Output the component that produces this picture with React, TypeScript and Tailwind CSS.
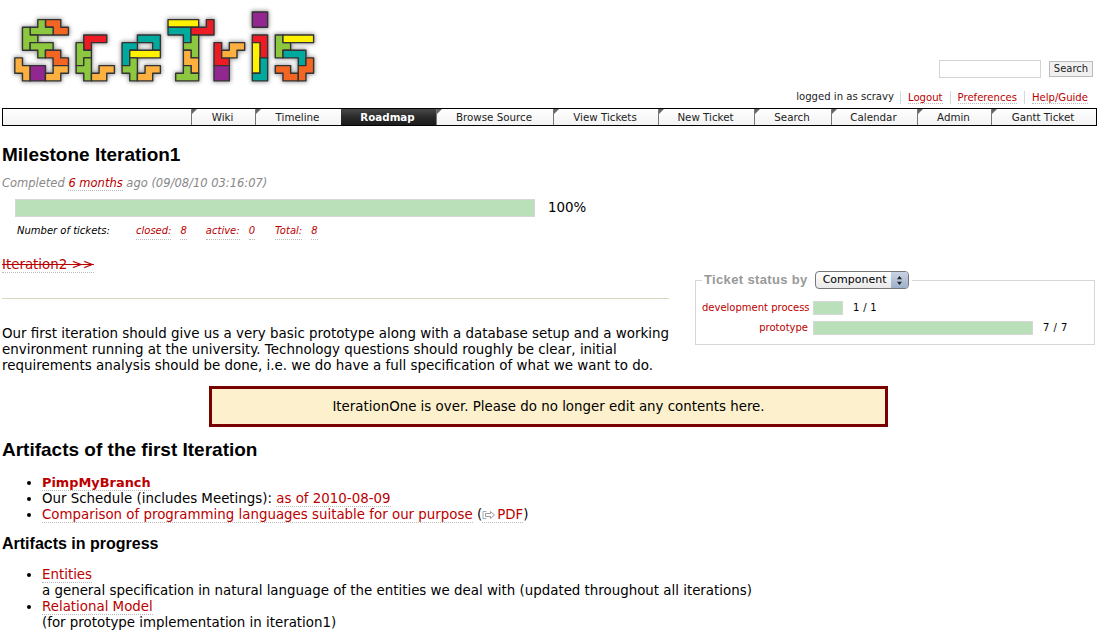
import React from "react";

const C = { o: "#f26522", g: "#8dc63f", l: "#fbb040", p: "#92278f", r: "#ed1c24", t: "#00a99d", y: "#fff200" };
const pieces: [string, string][] = [
  ["4,2 6,2 6,3 7,3 7,4 5,4 5,3 4,3", C.o],
  ["3,2 4,2 4,3 5,3 5,4 2,4 2,3 3,3", C.g],
  ["1,3 2,3 2,4 3,4 3,5 2,5 2,6 1,6", C.g],
  ["2,5 5,5 5,6 4,6 4,7 3,7 3,6 2,6", C.g],
  ["4,6 6,6 6,7 7,7 7,8 5,8 5,7 4,7", C.o],
  ["0,7 1,7 1,8 2,8 2,10 1,10 1,9 0,9", C.l],
  ["2,8 4,8 4,10 2,10", C.p],
  ["5,8 7,8 7,9 6,9 6,10 4,10 4,9 5,9", C.l],
  ["9,4 12,4 12,5 10,5 10,6 9,6", C.r],
  ["8,5 9,5 9,6 10,6 10,7 9,7 9,8 8,8", C.g],
  ["9,7 10,7 10,10 9,10 9,9 8,9 8,8 9,8", C.g],
  ["11,8 13,8 13,9 12,9 12,10 10,10 10,9 11,9", C.l],
  ["16,4 19,4 19,6 18,6 18,5 16,5", C.t],
  ["14,5 16,5 16,6 15,6 15,8 14,8", C.t],
  ["15,6 19,6 19,7 15,7", C.y],
  ["15,7 16,7 16,10 15,10 15,9 14,9 14,8 15,8", C.g],
  ["17,8 19,8 19,9 18,9 18,10 16,10 16,9 17,9", C.l],
  ["20,2 24,2 24,3 20,3", C.y],
  ["20,3 23,3 23,5 22,5 22,4 20,4", C.t],
  ["25,2 26,2 26,4 23,4 23,3 25,3", C.r],
  ["23,4 24,4 24,7 23,7 23,6 22,6 22,5 23,5", C.g],
  ["22,6 23,6 23,7 24,7 24,9 23,9 23,8 22,8", C.l],
  ["22,8 23,8 23,9 24,9 24,10 21,10 21,9 22,9", C.g],
  ["26,5 27,5 27,7 28,7 28,8 26,8", C.r],
  ["28,5 30,5 30,6 29,6 29,7 27,7 27,6 28,6", C.l],
  ["26,8 28,8 28,10 26,10", C.p],
  ["31,1 33,1 33,3 31,3", C.p],
  ["31,4 33,4 33,7 32,7 32,5 31,5", C.r],
  ["31,5 32,5 32,9 31,9", C.y],
  ["32,7 33,7 33,10 31,10 31,9 32,9", C.t],
  ["34,4 35,4 35,5 36,5 36,6 35,6 35,7 34,7", C.g],
  ["35,4 39,4 39,5 35,5", C.y],
  ["35,6 38,6 38,8 37,8 37,7 35,7", C.t],
  ["34,8 36,8 36,9 37,9 37,10 35,10 35,9 34,9", C.o],
  ["38,7 39,7 39,9 38,9 38,10 37,10 37,8 38,8", C.o],
];

function Logo() {
  return (
    <svg width="320" height="95" viewBox="-1.9 -0.56 41.7 12.4" className="block">
      <defs>
        <filter id="sh" x="-10%" y="-10%" width="120%" height="120%">
          <feGaussianBlur stdDeviation="0.3" />
        </filter>
      </defs>
      <g filter="url(#sh)" opacity="0.55">
        {pieces.map(([p], i) => (
          <polygon key={i} points={p} fill="#333" stroke="#333" strokeWidth="0.3" />
        ))}
      </g>
      {pieces.map(([p, c], i) => (
        <polygon key={i} points={p} fill={c} stroke="#333" strokeWidth="0.18" strokeLinejoin="round" />
      ))}
    </svg>
  );
}

const navItems: [string, string][] = [
  ["Wiki", "w-[64px]"],
  ["Timeline", "w-[86px]"],
  ["Roadmap", "w-[95px]"],
  ["Browse Source", "w-[117px]"],
  ["View Tickets", "w-[105px]"],
  ["New Ticket", "w-[96px]"],
  ["Search", "w-[77px]"],
  ["Calendar", "w-[86px]"],
  ["Admin", "w-[74px]"],
  ["Gantt Ticket", "w-[105px]"],
];

function L({ children, className = "" }: { children: React.ReactNode; className?: string }) {
  return <a className={`text-[#b00] border-b border-dotted border-[#bbb] ${className}`}>{children}</a>;
}

function PdfIcon() {
  return (
    <svg width="14" height="10" viewBox="0 0 14 10" className="inline-block mr-[1px] align-[-1px]">
      <path d="M4.5 1.5H1v7h3.5" fill="none" stroke="#aaa" strokeWidth="1" />
      <path d="M3.5 3.5h5V1.5l4 3.5-4 3.5v-2h-5z" fill="#fff" stroke="#999" strokeWidth="1" />
    </svg>
  );
}

export default function App() {
  return (
    <div className="w-[1100px] h-[639px] overflow-hidden bg-white text-black font-['DejaVu_Sans',Verdana,sans-serif] text-[13.38px] leading-[16px]">
      <header className="h-[108px] flex justify-between">
        <Logo />
        <div className="flex flex-col items-end pr-[7px] pt-[60px]">
          <div className="flex items-center gap-[8px] h-[18px]">
            <div className="w-[102px] h-[18px] border border-[#d4d4d4] bg-white" />
            <button className="w-[44px] h-[16px] border border-[#bbb] bg-[#f0f0f0] text-[10px] leading-[14px] text-[#222]">Search</button>
          </div>
          <div className="flex items-center mt-[11px] pr-[4px] h-[16px] text-[10.1px] text-[#222]">
            <span className="pr-[6px]">logged in as scravy</span>
            <span className="px-[7px] border-l border-[#d7d7d7] leading-[13px]"><L>Logout</L></span>
            <span className="px-[7px] border-l border-[#d7d7d7] leading-[13px]"><L>Preferences</L></span>
            <span className="pl-[7px] pr-[1px] border-l border-[#d7d7d7] leading-[13px]"><L>Help/Guide</L></span>
          </div>
        </div>
      </header>

      <nav className="ml-[2px] w-[1095px] h-[18px] border border-black flex justify-end bg-gradient-to-b from-white to-[#f2f2f2] text-[10.3px] leading-[17px] text-[#222]">
        {navItems.map(([t, w]) => {
          const active = t === "Roadmap";
          return (
            <div
              key={t}
              className={`relative ${w} h-[16px] pr-[2px] text-center ${
                active
                  ? "bg-gradient-to-b from-[#4a4a4a] via-[#2a2a2a] to-[#1c1c1c] text-white font-bold"
                  : "border-l border-[#777]"
              }`}
            >
              {!active && (
                <span className="absolute left-0 top-0 w-0 h-0 border-t-[5px] border-r-[5px] border-t-[#666] border-r-transparent" />
              )}
              <span className="leading-[16px] block">{t}</span>
            </div>
          );
        })}
      </nav>

      <main className="px-[2px]">
        <h1 className="mt-[19px] font-['Liberation_Sans',Arial,sans-serif] font-bold text-[19px] leading-[20px]">Milestone Iteration1</h1>
        <p className="mt-[10px] italic text-[11.5px] leading-[16px] text-[#888]">
          Completed <L>6 months</L> ago (09/08/10 03:16:07)
        </p>
        <div className="mt-[8px] ml-[13px] flex items-center">
          <div className="w-[520px] h-[18px] border border-[#d7d7d7] bg-[#bae0ba]" />
          <span className="ml-[13px]">100%</span>
        </div>
        <div className="mt-[6px] ml-[15px] flex italic text-[10px] leading-[16px]">
          <span className="w-[119px]">Number of tickets:</span>
          <L className="mr-[9px]">closed:</L>
          <L className="mr-[19px]">8</L>
          <L className="mr-[9px]">active:</L>
          <L className="mr-[20px]">0</L>
          <L className="mr-[9px]">Total:</L>
          <L>8</L>
        </div>

        <div className="flex justify-between">
          <div className="w-[667px]">
            <p className="mt-[17px]"><L className="line-through">Iteration2 &gt;&gt;</L></p>
            <hr className="mt-[25px] border-0 border-t border-[#d7d7c0]" />
            <p className="mt-[27px] -mr-[3px] text-[13.43px]">
              Our first iteration should give us a very basic prototype along with a database setup and a working environment running at the university. Technology questions should roughly be clear, initial requirements analysis should be done, i.e. we do have a full specification of what we want to do.
            </p>
          </div>
          <fieldset className="w-[400px] h-[74px] mt-[31px] mr-[3px] border border-[#d7d7d7] pl-[6px] pr-[8px]">
            <legend className="flex items-center pl-[2px] pr-[3px] text-[13px] font-bold text-[#999] font-['Liberation_Sans',Arial,sans-serif]">
              <span className="tracking-[0.35px]">Ticket status by</span>
              <div className="ml-[7px] w-[94px] h-[18px] rounded-[4px] border border-[#777] bg-gradient-to-b from-white to-[#e8e8e8] flex items-center justify-between font-['DejaVu_Sans',sans-serif] font-normal text-[11px] text-black">
                <span className="pl-[7px]">Component</span>
                <div className="w-[17px] h-full rounded-r-[3px] bg-gradient-to-b from-[#c9d3e3] to-[#9fb0ca] flex items-center justify-center">
                  <svg width="7" height="11" viewBox="0 0 7 11"><path d="M3.5 1 6 4.2H1zM3.5 10 1 6.8h5z" fill="#222" /></svg>
                </div>
              </div>
            </legend>
            <div className="mt-[11px] flex items-center h-[16px] text-[10px] leading-[16px]">
              <span className="w-[106px] text-right whitespace-nowrap"><a className="text-[#b00]">development process</a></span>
              <div className="ml-[5px] w-[30px] h-[14px] border border-[#d7d7d7] bg-[#bae0ba]" />
              <span className="ml-[10px] tracking-[0.3px]">1 / 1</span>
            </div>
            <div className="mt-[4px] flex items-center h-[16px] text-[10px] leading-[16px]">
              <span className="w-[106px] text-right"><a className="text-[#b00]">prototype</a></span>
              <div className="ml-[5px] w-[220px] h-[14px] border border-[#d7d7d7] bg-[#bae0ba]" />
              <span className="ml-[10px] tracking-[0.5px]">7 / 7</span>
            </div>
          </fieldset>
        </div>

        <div className="mt-[12px] ml-[207px] w-[679px] h-[41px] border-[3px] border-[#7a0000] bg-[#fdf0cc] flex items-center justify-center">
          IterationOne is over. Please do no longer edit any contents here.
        </div>

        <h2 className="mt-[12px] font-['Liberation_Sans',Arial,sans-serif] font-bold text-[19px] leading-[21px]">Artifacts of the first Iteration</h2>
        <ul className="mt-[15px] pl-[40px] list-disc">
          <li><L className="font-bold text-[12.9px]">PimpMyBranch</L></li>
          <li>Our Schedule (includes Meetings): <L>as of 2010-08-09</L></li>
          <li>
            <L>Comparison of programming languages suitable for our purpose</L> (
            <a className="text-[#b00] border-b border-dotted border-[#bbb]"><PdfIcon />PDF</a>)
          </li>
        </ul>
        <h3 className="mt-[12px] font-['Liberation_Sans',Arial,sans-serif] font-bold text-[16px] leading-[18px]">Artifacts in progress</h3>
        <ul className="mt-[14px] pl-[40px] list-disc">
          <li>
            <L>Entities</L>
            <br />
            a general specification in natural language of the entities we deal with (updated throughout all iterations)
          </li>
          <li>
            <L>Relational Model</L>
            <br />
            (for prototype implementation in iteration1)
          </li>
        </ul>
      </main>
    </div>
  );
}
